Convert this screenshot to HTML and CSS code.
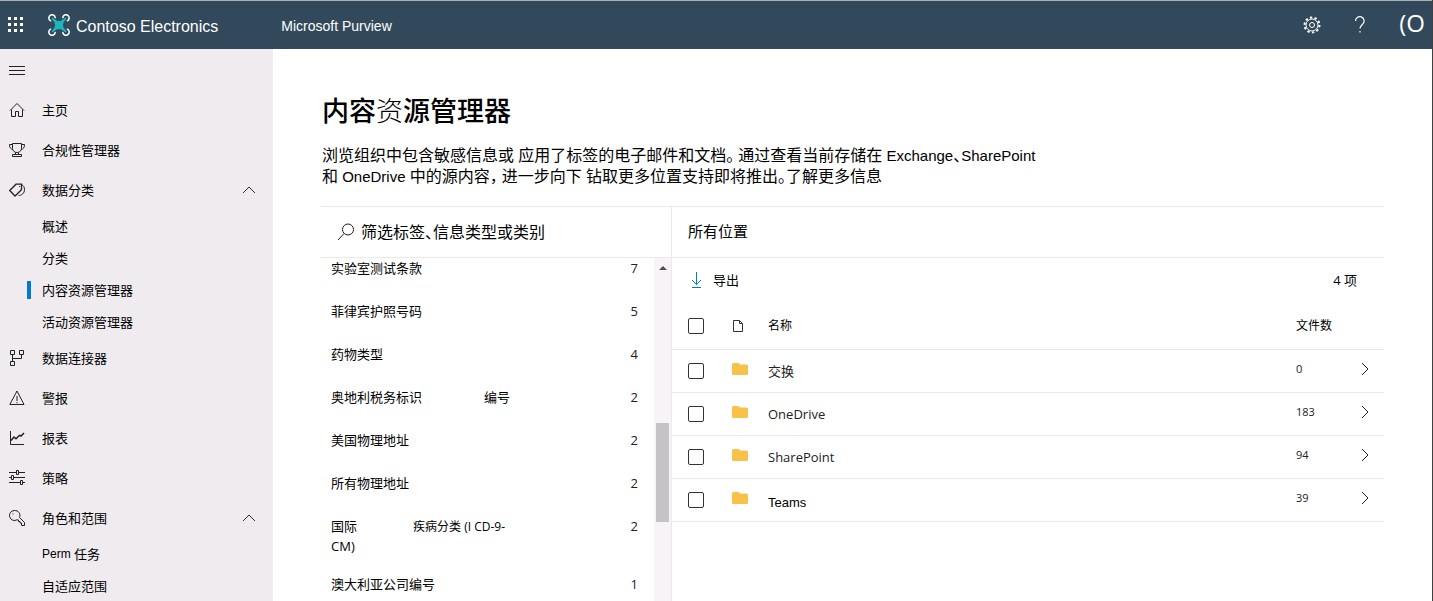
FILE: index.html
```html
<!DOCTYPE html>
<html lang="zh-CN">
<head>
<meta charset="utf-8">
<title>内容资源管理器 - Microsoft Purview</title>
<link rel="stylesheet" href="styles.css">
</head>
<body>
<div class="app">
  <header class="topbar">
    <button class="launcher" aria-label="应用启动器">
      <svg width="16" height="16" viewBox="0 0 16 16" fill="#fff"><path d="M0 0h3v3H0zM6 0h3v3H6zM12 0h3v3h-3zM0 6h3v3H0zM6 6h3v3H6zM12 6h3v3h-3zM0 12h3v3H0zM6 12h3v3H6zM12 12h3v3h-3z"/></svg>
    </button>
    <a class="brand" href="#">
      <svg width="22" height="22" viewBox="0 0 22 22" fill="none">
        <g stroke="#fff" stroke-width="1.5" stroke-linecap="round">
          <path d="M2.600 6.800A3.200 3.200 0 1 1 7.200 3.600"/>
          <path d="M19.400 6.800A3.200 3.200 0 1 0 14.800 3.600"/>
          <path d="M2.600 15.200A3.200 3.200 0 1 0 7.200 18.400"/>
          <path d="M19.400 15.200A3.200 3.200 0 1 1 14.800 18.400"/>
        </g>
        <path d="M4.500 3.500 8.500 6.500q2.500 1.200 5 0l4-3 1 1-3 4q-1.200 2.500 0 5l3 4-1 1-4-3q-2.500-1.200-5 0l-4 3-1-1 3-4q1.200-2.500 0-5l-3-4z" fill="#1cb5bd"/>
      </svg>
      <span>Contoso Electronics</span>
    </a>
    <a class="product" href="#">Microsoft Purview</a>
    <div class="tools">
      <button aria-label="设置">
        <svg width="18" height="18" viewBox="0 0 18 18" fill="none" stroke="#fff"><circle cx="9" cy="9" r="2.500"/><circle cx="9" cy="9" r="6"/><circle cx="9" cy="9" r="7.500" stroke-width="2" stroke-dasharray="2.360 2.352"/></svg>
      </button>
      <button aria-label="帮助">
        <svg width="12" height="18" viewBox="0 0 12 18" fill="none" stroke="#fff" stroke-width="1.200"><path d="M1.500 5a4.300 4.300 0 1 1 7.600 2.700C7.700 9.400 6 10 6 12.500M6 15v1.500"/></svg>
      </button>
      <button class="account" aria-label="帐户">(O</button>
    </div>
  </header>

  <div class="body">
    <nav class="sidebar">
      <button class="nav-row" aria-label="折叠导航"><svg class="icon" viewBox="0 0 16 16"><path d="M0 4.500h16M0 8.500h16M0 12.500h16"/></svg></button>
      <a class="nav-row" href="#"><svg class="icon" viewBox="0 0 16 16"><path d="M1 8.500 8 1.500l7 7M2.500 7.500v7h4v-5h3v5h4v-7"/></svg>主页</a>
      <a class="nav-row" href="#"><svg class="icon" viewBox="0 0 16 16"><path d="M3.500 1.500h9v5a4.500 4 0 0 1-9 0zM3.500 2.500H.5c0 3 1 4.500 3.500 5M12.500 2.500h3c0 3-1 4.500-3.500 5M6.500 10.500v2M9.500 10.500v2M3.500 14.500v-2h9v2z"/></svg>合规性管理器</a>
      <a class="nav-row" href="#"><svg class="icon" viewBox="0 0 16 16"><path d="M.7 8.500 7 2.200h5.500v5.500L6 14z" stroke-width="1.300"/><path d="M10 4.500h.8M12.500 2.700c2 .7 3 2.500 3 5 0 3.500-3 5.800-6 5.800"/></svg>数据分类<svg class="caret" viewBox="0 0 14 8"><path d="M1 7l6-6 6 6"/></svg></a>
      <a class="nav-row sub" href="#">概述</a>
      <a class="nav-row sub" href="#">分类</a>
      <a class="nav-row sub current" href="#" aria-current="page">内容资源管理器</a>
      <a class="nav-row sub" href="#">活动资源管理器</a>
      <a class="nav-row" href="#"><svg class="icon" viewBox="0 0 16 16"><path d="M1.500.5h4v4h-4zM10.500.5h4v4h-4zM1.500 11.500h4v4h-4zM3.500 4.500v7M3.500 8.500h9v-4"/></svg>数据连接器</a>
      <a class="nav-row" href="#"><svg class="icon" viewBox="0 0 16 16"><path d="M8 1 15 14.500H.8zM8 6v5M8 12v1.200"/></svg>警报</a>
      <a class="nav-row" href="#"><svg class="icon" viewBox="0 0 16 16"><path d="M1.500 1v13.500H15"/><path d="M2 10.500 5 7l2 1.800 3.500-3.500 1.500.7 3-3" stroke-width="1.500"/></svg>报表</a>
      <a class="nav-row" href="#"><svg class="icon" viewBox="0 0 16 16"><path d="M0 2.500h7.500M9.500 2.500H16M0 7.500h2.500M4.500 7.500H16M0 12.500h11.500M13.500 12.500H16M7.500.5h2v4h-2zM2.500 5.500h2v4h-2zM11.500 10.500h2v4h-2z"/></svg>策略</a>
      <a class="nav-row" href="#"><svg class="icon" viewBox="0 0 16 16"><path d="M5.500.5a5 5 0 1 0 2.500 9.300l1.500.2v1.500H11V13h1.500v2.500h3v-3l-5-5A5 5 0 0 0 5.500.5zM3.500 4h1"/></svg>角色和范围<svg class="caret" viewBox="0 0 14 8"><path d="M1 7l6-6 6 6"/></svg></a>
      <a class="nav-row sub" href="#"><span class="latin-small">Perm</span>&nbsp;任务</a>
      <a class="nav-row sub" href="#">自适应范围</a>
    </nav>

    <main class="content">
      <h1>内容<span class="light">资</span>源管理器</h1>
      <p class="intro">浏览组织中包含敏感信息或 应用了标签的电子邮件和文档。 通过查看当前存储在 <span class="latin">Exchange</span>、<span class="latin">SharePoint</span><br>和 <span class="latin">OneDrive</span> 中的源内容， 进一步向下 钻取更多位置支持即将推出。了解更多信息</p>

      <div class="explorer">
        <section class="filters">
          <label class="search">
            <svg width="18" height="18" viewBox="0 0 18 18" fill="none" stroke="#222"><circle cx="11" cy="6.500" r="5.500"/><path d="M7 10.500 1 17"/></svg>
            <input type="search" aria-label="筛选标签" placeholder="筛选标签、信息类型或类别">
          </label>
          <div class="scroll-area">
            <ul class="labels">
              <li><span>实验室测试条款</span><span class="num">7</span></li>
              <li><span>菲律宾护照号码</span><span class="num">5</span></li>
              <li><span>药物类型</span><span class="num">4</span></li>
              <li><span>奥地利税务标识<span class="spaced">编号</span></span><span class="num">2</span></li>
              <li><span>美国物理地址</span><span class="num">2</span></li>
              <li><span>所有物理地址</span><span class="num">2</span></li>
              <li><span>国际<span class="spaced small">疾病分类 (I CD-9-</span><br>CM)</span><span class="num">2</span></li>
              <li><span>澳大利亚公司编号</span><span class="num">1</span></li>
            </ul>
            <div class="scrollbar">
              <svg width="8" height="4" viewBox="0 0 8 4" fill="#505050"><path d="M0 4l4-4 4 4z"/></svg>
              <div class="thumb"></div>
            </div>
          </div>
        </section>

        <section class="locations">
          <h2>所有位置</h2>
          <div class="toolbar">
            <button class="export"><svg width="16" height="18" viewBox="0 0 16 18" fill="none" stroke="#0078d4"><path d="M7.500 1v12.500M3 9l4.500 4.500L12 9M3 16.500h9"/></svg>导出</button>
            <span>4 项</span>
          </div>
          <table>
            <thead>
              <tr>
                <th class="c-check"><input type="checkbox" aria-label="全选"></th>
                <th class="c-icon"><svg width="12" height="14" viewBox="0 0 12 14" fill="none" stroke="#333"><path d="M1.500 1.500h6l3 3v8h-9zM7.500 1.500v3h3"/></svg></th>
                <th class="c-name">名称</th>
                <th class="c-count">文件数</th>
                <th class="c-go"></th>
              </tr>
            </thead>
            <tbody>
              <tr>
                <td><input type="checkbox" aria-label="交换"></td>
                <td class="up"><svg class="folder" viewBox="0 0 16 12"><path d="M0 1.500Q0 0 1.500 0h5L8 1.500h6.500Q16 1.500 16 3v7.500q0 1.500-1.500 1.500h-13Q0 12 0 10.500z"/></svg></td>
                <td>交换</td><td class="up count">0</td>
                <td class="up"><svg class="go" viewBox="0 0 8 14"><path d="M1 1l6 6-6 6"/></svg></td>
              </tr>
              <tr>
                <td><input type="checkbox" aria-label="OneDrive"></td>
                <td class="up"><svg class="folder" viewBox="0 0 16 12"><path d="M0 1.500Q0 0 1.500 0h5L8 1.500h6.500Q16 1.500 16 3v7.500q0 1.500-1.500 1.500h-13Q0 12 0 10.500z"/></svg></td>
                <td>OneDrive</td><td class="up count">183</td>
                <td class="up"><svg class="go" viewBox="0 0 8 14"><path d="M1 1l6 6-6 6"/></svg></td>
              </tr>
              <tr>
                <td><input type="checkbox" aria-label="SharePoint"></td>
                <td class="up"><svg class="folder" viewBox="0 0 16 12"><path d="M0 1.500Q0 0 1.500 0h5L8 1.500h6.500Q16 1.500 16 3v7.500q0 1.500-1.500 1.500h-13Q0 12 0 10.500z"/></svg></td>
                <td>SharePoint</td><td class="up count">94</td>
                <td class="up"><svg class="go" viewBox="0 0 8 14"><path d="M1 1l6 6-6 6"/></svg></td>
              </tr>
              <tr>
                <td><input type="checkbox" aria-label="Teams"></td>
                <td class="up"><svg class="folder" viewBox="0 0 16 12"><path d="M0 1.500Q0 0 1.500 0h5L8 1.500h6.500Q16 1.500 16 3v7.500q0 1.500-1.500 1.500h-13Q0 12 0 10.500z"/></svg></td>
                <td class="teams">Teams</td><td class="up count">39</td>
                <td class="up"><svg class="go" viewBox="0 0 8 14"><path d="M1 1l6 6-6 6"/></svg></td>
              </tr>
            </tbody>
          </table>
        </section>
      </div>
    </main>
  </div>
</div>
</body>
</html>
```

FILE: styles.css
```css
* { box-sizing: border-box; }
body {
  margin: 0;
  font: 13px/20px "Open Sans", "Noto Sans CJK SC", sans-serif;
  color: #000;
  background: #fff;
}
button { border: 0; padding: 0; background: none; font: inherit; color: inherit; cursor: pointer; }
a { color: inherit; text-decoration: none; }
svg { flex: none; display: block; }

.app {
  display: flex;
  flex-direction: column;
  height: 100vh;
  overflow: hidden;
  border-right: 1px solid #404040;
}

.topbar {
  display: flex;
  align-items: center;
  flex: none;
  height: 49px;
  padding: 0 7px 0 8px;
  border-top: 1px solid #a9b0b4;
  background: #32495b;
  color: #fff;
  font-family: "Liberation Sans", sans-serif;
}
.brand { display: flex; align-items: center; gap: 6px; margin-left: 24px; font-size: 16px; }
.brand span { padding-top: 3px; }
.product { margin-left: 63px; padding-top: 1px; font-size: 14px; }
.tools { display: flex; align-items: center; gap: 33px; margin-left: auto; }
.account { font: 24px/40px "Open Sans", sans-serif; padding-bottom: 4px; }

.body { display: flex; flex: 1; min-height: 0; }

.sidebar {
  flex: none;
  width: 273px;
  padding-top: 1px;
  background: #efebef;
  overflow: hidden;
}
.nav-row {
  display: flex;
  align-items: center;
  width: 100%;
  height: 40px;
  padding: 0 17px 0 9px;
}
.nav-row.sub { height: 32px; padding-left: 42px; }
.nav-row.current { padding-left: 27px; }
.nav-row.current::before { content: ""; width: 4px; height: 18px; margin-right: 11px; background: #0078d4; }
.icon { width: 16px; height: 16px; margin-right: 17px; fill: none; stroke: #222; }
.caret { width: 14px; height: 8px; margin-left: auto; fill: none; stroke: #333; }
.latin-small { font: 12px/20px "Liberation Sans", sans-serif; }

.content {
  display: flex;
  flex-direction: column;
  flex: 1;
  min-width: 0;
  padding: 42px 48px 0;
}
h1 { margin: 0; padding-left: 1px; font-size: 27px; line-height: 40px; font-weight: 500; }
.light { font-weight: 300; }
.intro { margin: 14px 0 19px; padding-left: 1px; font-size: 16px; line-height: 21px; font-feature-settings: "halt"; }
.latin { font-family: "Liberation Sans", sans-serif; font-size: 15px; }

.explorer { display: flex; flex: 1; min-height: 0; border-top: 1px solid #ebe9eb; }
.filters {
  display: flex;
  flex-direction: column;
  flex: none;
  width: 351px;
  border-right: 1px solid #ebe9eb;
}
.search {
  display: flex;
  align-items: center;
  gap: 6px;
  flex: none;
  height: 51px;
  padding: 0 16px;
  border-bottom: 1px solid #ebe9eb;
}
.search input {
  flex: 1;
  min-width: 0;
  padding: 0 0 3px;
  border: 0;
  outline: 0;
  background: none;
  font: 16px/24px "Noto Sans CJK SC", sans-serif;
  font-feature-settings: "halt";
}
.search input::placeholder { color: #000; opacity: 1; }

.scroll-area { display: flex; flex: 1; min-height: 0; }
.labels { flex: 1; margin: 0; padding: 0 16px 0 10px; list-style: none; overflow: hidden; }
.labels li { display: flex; justify-content: space-between; min-height: 43px; padding-bottom: 18px; }
.num { color: #222; }
.spaced { margin-left: 62px; }
.spaced.small { margin-left: 56px; font-size: 12px; line-height: 18px; }
.scrollbar { display: flex; flex-direction: column; align-items: center; flex: none; width: 17px; padding-top: 8px; background: #f7f3f7; }
.thumb { width: 13px; height: 99px; margin-top: 153px; background: #c5c3c5; }

.locations { flex: 1; min-width: 0; }
h2 { margin: 0; height: 51px; padding: 0 16px; border-bottom: 1px solid #ebe9eb; font-size: 15px; line-height: 48px; font-weight: 400; }
.toolbar { display: flex; align-items: center; justify-content: space-between; height: 46px; padding: 0 27px 2px 17px; }
.export { display: flex; align-items: center; gap: 8px; }

table { width: 100%; border-collapse: collapse; table-layout: fixed; }
th, td { padding: 0; border-bottom: 1px solid #ebe9eb; text-align: left; font-weight: 400; vertical-align: middle; }
th { height: 45px; font-size: 12px; }
td { height: 43px; color: #222; }
.c-check { width: 60px; }
.c-icon { width: 36px; }
.c-count { width: 65px; }
.c-go { width: 23px; }
th.c-check, td:first-child { padding-left: 16px; }
.up { padding-bottom: 4px; }
.count { font-size: 11px; }
.teams { padding-top: 6px; font-family: "Liberation Sans", sans-serif; color: #000; }
.folder { width: 16px; height: 12px; fill: #f8c24a; }
.go { width: 8px; height: 14px; fill: none; stroke: #222; }
input[type="checkbox"] {
  appearance: none;
  display: block;
  width: 16px;
  height: 16px;
  margin: 0;
  border: 1px solid #333;
  border-radius: 2px;
  background: #fff;
}
```
